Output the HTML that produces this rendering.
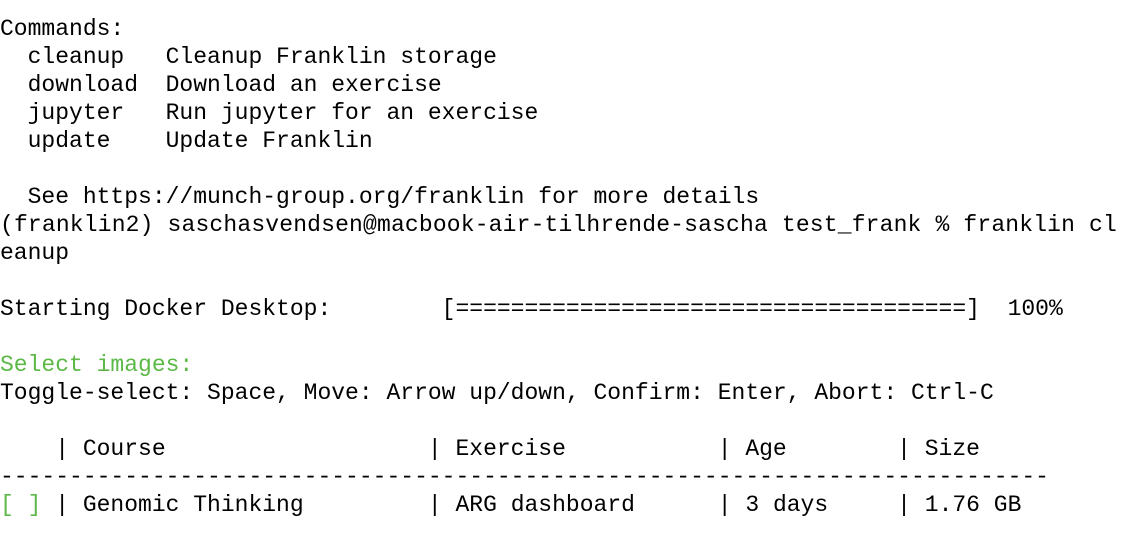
<!DOCTYPE html>
<html><head><style>
html,body{margin:0;padding:0;background:#fff;width:1122px;height:538px;overflow:hidden}
pre{margin:0;padding:15px 0 0 0;font-family:"Liberation Mono",monospace;font-size:23px;line-height:28px;color:#000;white-space:pre}
.g{color:#5cb947}
.w{letter-spacing:0.16px}
</style></head><body><pre>Commands:
  cleanup   Cleanup Franklin storage
  download  Download an exercise
  jupyter   Run jupyter for an exercise
  update    Update Franklin

  See https://munch-group.org/franklin for more details
<span class="w">(franklin2) saschasvendsen@macbook-air-tilhrende-sascha test_frank % franklin cl</span>
eanup

Starting Docker Desktop:        [=====================================]  100%

<span class="g">Select images:</span>
Toggle-select: Space, Move: Arrow up/down, Confirm: Enter, Abort: Ctrl-C

    | Course                   | Exercise           | Age        | Size
----------------------------------------------------------------------------
<span class="g">[ ]</span> | Genomic Thinking         | ARG dashboard      | 3 days     | 1.76 GB
</pre></body></html>
